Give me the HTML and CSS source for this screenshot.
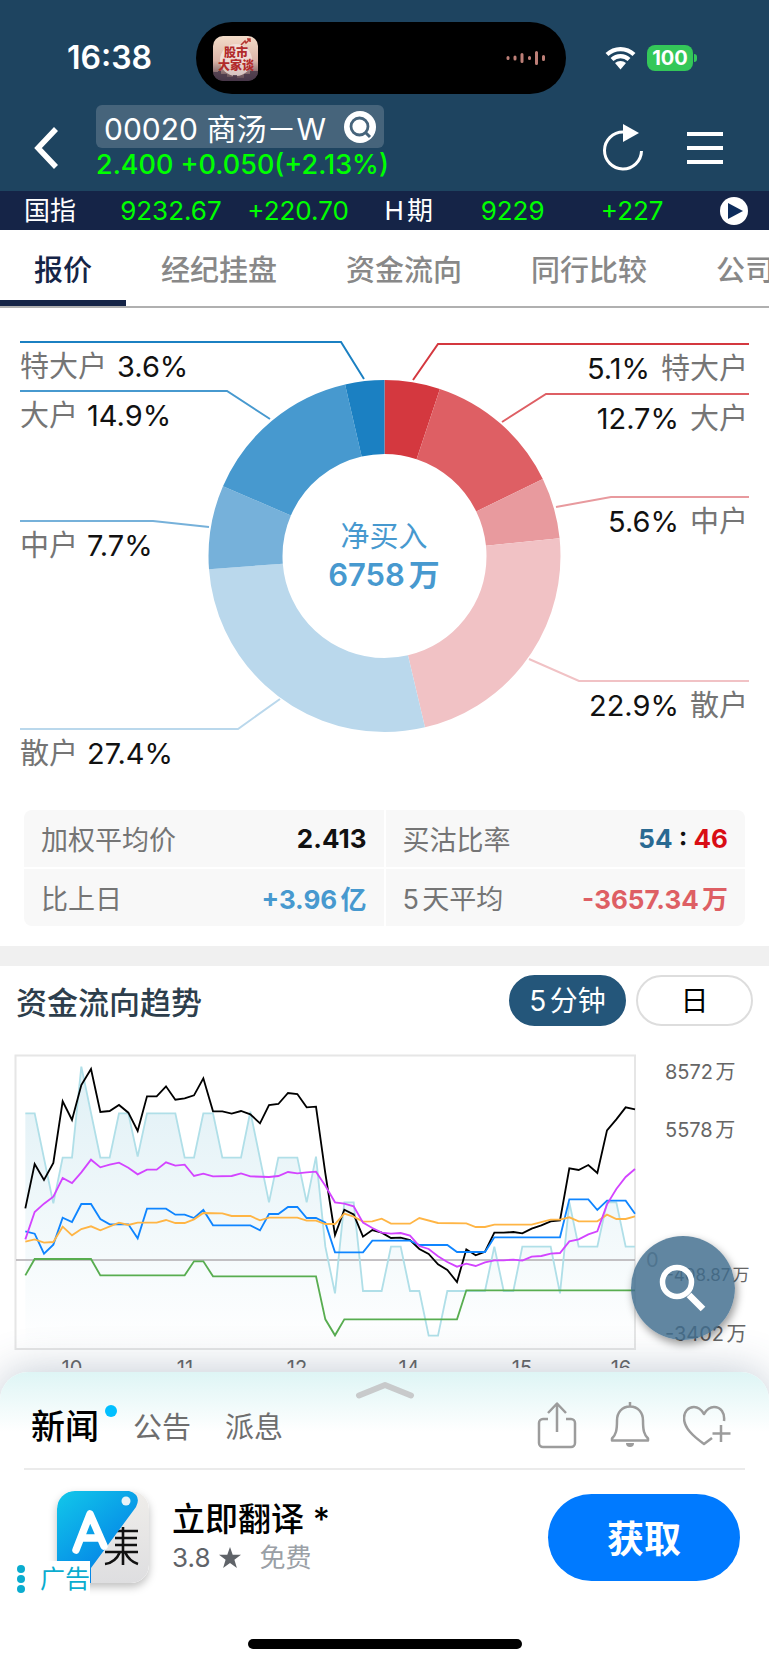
FILE: index.html
```html
<!DOCTYPE html>
<html lang="zh-CN">
<head>
<meta charset="utf-8">
<meta name="viewport" content="width=device-width, initial-scale=1">
<title>00020 商汤－W</title>
<link rel="stylesheet" href="styles.css">
</head>
<body>
<header class="header">
  <div class="status">
    <time class="clock">16:38</time>
    <div class="island">
      <svg class="app-icon" viewBox="0 0 45 45" aria-hidden="true">
        <defs>
          <linearGradient id="sky" x1="0" y1="0" x2="0" y2="1"><stop offset="0" stop-color="#f3dcc9"/><stop offset=".55" stop-color="#dcb5a8"/><stop offset="1" stop-color="#4e3b48"/></linearGradient>
          <clipPath id="tile"><rect width="45" height="45" rx="10"/></clipPath>
        </defs>
        <g clip-path="url(#tile)">
          <rect width="45" height="45" fill="url(#sky)"/>
          <circle cx="23" cy="24" r="16" fill="#f4e6e0" opacity=".75"/>
          <path d="M28 9l4-4 1 2 4-4m-3 0h3v3" stroke="#b5342f" stroke-width="1.500" fill="none"/>
          <path d="M0 36h5v-1h3v3h6v3h6v-2h4v3h7v-4h6v-3h8v13H0z" fill="#463648" opacity=".8"/>
        </g>
        <text x="23" y="21" class="tile-text">股市</text>
        <text x="23" y="34" class="tile-text">大家谈</text>
      </svg>
      <svg class="wave" viewBox="0 0 40 16" aria-hidden="true"><path d="M2 7.500v1M9 7v2M16 4.500v7M23.500 7.500v1M30.500 2.500v11M37.500 6.500v3"/></svg>
    </div>
    <div class="signals">
      <svg class="wifi" viewBox="0 0 31 24" aria-hidden="true"><path d="M2 8.500a19.500 19.500 0 0 1 27 0M7 13.500a12.500 12.500 0 0 1 17 0" fill="none" stroke="#fff" stroke-width="4.200"/><path d="M10 17a8.500 8.500 0 0 1 11 0l-5.500 6.500z" fill="#fff"/></svg>
      <span class="battery">100</span>
    </div>
  </div>
  <div class="nav">
    <button class="icon-btn back" aria-label="返回"><svg width="26" height="44" viewBox="0 0 26 44"><path d="M23 3L5 22l18 19" fill="none" stroke="#fff" stroke-width="5.500"/></svg></button>
    <div class="quote">
      <button class="stock"><span>00020 商汤－W</span>
        <svg width="32" height="32" viewBox="0 0 32 32" aria-hidden="true"><circle cx="16" cy="16" r="16" fill="#fff"/><circle cx="15.500" cy="15.500" r="8.500" fill="none" stroke="#46647b" stroke-width="2.800"/><path d="M21 21l5 5" stroke="#46647b" stroke-width="3"/></svg>
      </button>
      <p class="price">2.400 +0.050(+2.13%)</p>
    </div>
    <button class="icon-btn" aria-label="刷新"><svg width="42" height="48" viewBox="0 0 42 48"><path d="M20 8a18.500 18.500 0 1 0 18.500 19" fill="none" stroke="#fff" stroke-width="3"/><path d="M20 0l16 9-16 9z" fill="#fff"/></svg></button>
    <button class="icon-btn menu" aria-label="菜单"><svg width="36" height="32" viewBox="0 0 36 32"><path d="M0 2h36M0 16h36M0 30h36" stroke="#fff" stroke-width="4"/></svg></button>
  </div>
</header>
<section class="ticker">
  <span class="name">国指</span><span>9232.67</span><span>+220.70</span><span class="name">H期</span><span>9229</span><span>+227</span>
  <button class="icon-btn" aria-label="下一个"><svg width="28" height="28" viewBox="0 0 28 28"><circle cx="14" cy="14" r="14" fill="#fff"/><path d="M8 6l15 8-15 8z" fill="#0d2c5c"/></svg></button>
</section>
<nav class="tabs">
  <a href="#" class="active">报价</a><a href="#">经纪挂盘</a><a href="#">资金流向</a><a href="#">同行比较</a><a href="#">公司资料</a>
</nav>
<main>
  <svg class="donut" viewBox="0 0 769 502" role="img" aria-label="资金流向分布">
    <g class="ring" transform="rotate(-90 384.5 248)">
      <circle pathLength="100" cx="384.500" cy="248" r="139" stroke="#d4383f" stroke-dasharray="5.1 94.9"/>
      <circle pathLength="100" cx="384.500" cy="248" r="139" stroke="#de5f64" stroke-dasharray="12.7 87.3" stroke-dashoffset="-5.1"/>
      <circle pathLength="100" cx="384.500" cy="248" r="139" stroke="#e89a9e" stroke-dasharray="5.6 94.4" stroke-dashoffset="-17.8"/>
      <circle pathLength="100" cx="384.500" cy="248" r="139" stroke="#f1c2c5" stroke-dasharray="22.9 77.1" stroke-dashoffset="-23.4"/>
      <circle pathLength="100" cx="384.500" cy="248" r="139" stroke="#bad8ec" stroke-dasharray="27.5 72.5" stroke-dashoffset="-46.3"/>
      <circle pathLength="100" cx="384.500" cy="248" r="139" stroke="#76b1da" stroke-dasharray="7.7 92.3" stroke-dashoffset="-73.8"/>
      <circle pathLength="100" cx="384.500" cy="248" r="139" stroke="#4799cf" stroke-dasharray="14.9 85.1" stroke-dashoffset="-81.5"/>
      <circle pathLength="100" cx="384.500" cy="248" r="139" stroke="#1b80c2" stroke-dasharray="3.6 96.4" stroke-dashoffset="-96.4"/>
    </g>
    <g fill="none" stroke-width="2">
      <path stroke="#1b80c2" d="M20 34h321l23 37"/><path stroke="#4799cf" d="M20 83h207l43 28"/><path stroke="#76b1da" d="M20 213h133l56 6"/><path stroke="#bad8ec" d="M20 421h218l42-30"/>
      <path stroke="#d4383f" d="M749 36H438l-25 36"/><path stroke="#de5f64" d="M749 86H546l-44 28"/><path stroke="#e89a9e" d="M749 189H611l-55 10"/><path stroke="#f1c2c5" d="M749 373H579l-50-22"/>
    </g>
    <g class="slice">
      <text x="20" y="69">特大户 <tspan class="pct" x="117">3.6%</tspan></text>
      <text x="20" y="118">大户 <tspan class="pct" x="87">14.9%</tspan></text>
      <text x="20" y="248">中户 <tspan class="pct" x="87">7.7%</tspan></text>
      <text x="20" y="456">散户 <tspan class="pct" x="87">27.4%</tspan></text>
    </g>
    <g class="slice end">
      <text x="748" y="71">特大户</text><text class="pct" x="650" y="71">5.1%</text>
      <text x="748" y="121">大户</text><text class="pct" x="679" y="121">12.7%</text>
      <text x="748" y="224">中户</text><text class="pct" x="679" y="224">5.6%</text>
      <text x="748" y="408">散户</text><text class="pct" x="679" y="408">22.9%</text>
    </g>
    <text class="net" x="384" y="239">净买入</text>
    <text class="net net-value" x="384" y="278">6758万</text>
  </svg>
  <dl class="stats">
    <div><dt>加权平均价</dt><dd>2.413</dd></div>
    <div><dt>买沽比率</dt><dd><span class="buy">54</span> : <span class="sell">46</span></dd></div>
    <div><dt>比上日</dt><dd class="up">+3.96亿</dd></div>
    <div><dt>5天平均</dt><dd class="down">-3657.34万</dd></div>
  </dl>
  <section class="trend">
    <div class="trend-head">
      <h2>资金流向趋势</h2>
      <button class="pill on">5分钟</button>
      <button class="pill">日</button>
    </div>
    <div class="chart">
      <svg class="plot" viewBox="0 0 769 328" role="img" aria-label="资金流向趋势图">
        <defs><linearGradient id="fade" x1="0" y1="0" x2="0" y2="1"><stop offset="0" stop-color="#add8e6" stop-opacity=".38"/><stop offset="1" stop-color="#add8e6" stop-opacity="0"/></linearGradient></defs>
        <rect x="15.500" y="15.500" width="619.500" height="293.500" fill="none" stroke="#e6e6e6" stroke-width="2"/>
        <svg x="0" y="0" width="769" height="320" viewBox="0 0 2307 960">
          <path fill="url(#fade)" d="M76 927V220L104 220 160 490 188 353 216 353 244 80 301 353 329 353 357 220 385 220 413 350 441 220 526 220 554 353 582 353 610 220 639 220 667 353 723 353 751 215 807 487 835 353 892 353 920 487 948 350 976 620 1005 760 1033 487 1061 487 1089 753 1145 753 1173 620 1202 620 1230 753 1258 753 1286 887 1314 887 1342 753 1455 753 1483 620 1511 753 1540 753 1567 620 1652 620 1680 760 1708 487 1736 620 1792 620 1821 487 1849 487 1877 620 1905 620V927z"/>
          <path d="M48 660H1905" stroke="#b0adb0" stroke-width="5"/>
          <g fill="none" stroke-width="5.500">
            <polyline stroke="#b0dfe8" points="76,220 104,220 160,490 188,353 216,353 244,80 301,353 329,353 357,220 385,220 413,350 441,220 526,220 554,353 582,353 610,220 639,220 667,353 723,353 751,215 807,487 835,353 892,353 920,487 948,350 976,620 1005,760 1033,487 1061,487 1089,753 1145,753 1173,620 1202,620 1230,753 1258,753 1286,887 1314,887 1342,753 1455,753 1483,620 1511,753 1540,753 1567,620 1652,620 1680,760 1708,487 1736,620 1792,620 1821,487 1849,487 1877,620 1905,620"/>
            <polyline stroke="#58ad50" points="76,706 104,657 273,657 301,706 554,706 582,664 610,664 639,709 948,709 976,838 1005,886 1033,838 1371,838 1399,751 1905,751"/>
            <polyline stroke="#000" points="76,505 104,372 132,420 160,369 188,184 216,240 244,135 273,87 301,216 329,213 357,195 385,218 413,273 441,169 470,169 498,139 526,179 554,175 582,166 610,115 639,214 667,214 695,221 723,213 751,223 780,250 807,195 835,192 864,159 892,162 920,202 948,200 976,400 1005,585 1033,509 1061,523 1089,590 1117,570 1145,578 1173,594 1202,593 1230,600 1258,627 1286,642 1314,673 1342,690 1371,726 1399,628 1427,646 1455,635 1483,578 1511,578 1540,576 1567,580 1595,566 1624,556 1652,544 1680,541 1708,385 1736,390 1765,375 1792,399 1821,271 1849,238 1877,202 1905,208"/>
            <polyline stroke="#0f85ff" points="76,574 104,581 132,641 160,614 188,533 216,546 244,492 273,492 301,537 329,553 385,553 413,595 441,506 498,506 526,524 554,524 582,534 610,510 639,556 751,556 780,571 807,522 835,522 864,501 892,501 920,534 948,534 976,548 1005,637 1089,637 1117,602 1230,602 1258,615 1342,615 1371,636 1455,636 1483,592 1680,592 1708,478 1765,478 1792,510 1821,482 1877,482 1905,521"/>
            <polyline stroke="#ffb545" points="76,605 104,598 132,608 160,606 188,560 216,586 244,567 273,559 301,571 357,548 385,555 413,548 470,548 498,540 526,549 554,549 582,538 610,519 667,520 695,528 751,528 780,541 807,533 892,533 920,542 948,542 976,552 1005,552 1033,521 1061,530 1089,545 1117,544 1145,536 1173,551 1230,551 1258,534 1314,549 1399,550 1427,561 1455,561 1483,554 1595,554 1652,539 1680,539 1708,532 1736,544 1792,544 1821,524 1849,537 1877,537 1905,529"/>
            <polyline stroke="#d344ff" points="76,598 104,516 132,491 160,470 188,414 216,429 244,397 273,359 301,382 329,374 357,368 385,383 413,403 441,389 470,389 498,367 526,377 554,374 582,408 610,401 639,409 695,408 723,400 751,409 807,411 835,408 864,396 892,400 920,397 948,395 976,437 1005,487 1033,491 1061,499 1089,548 1117,564 1145,578 1173,581 1202,579 1230,587 1258,618 1286,627 1314,649 1342,666 1371,680 1399,671 1427,678 1455,667 1483,661 1511,661 1540,659 1567,662 1595,650 1624,648 1652,641 1680,639 1708,604 1736,598 1765,583 1792,574 1821,493 1849,447 1877,411 1905,387"/>
          </g>
        </svg>
        <g class="axis">
          <text x="665" y="39">8572万</text><text x="665" y="97">5578万</text>
          <text x="646" y="227" class="zero">0</text>
          <text x="666" y="241" class="small">-408.87万</text><text x="665" y="301">-3402万</text>
        </g>
        <g class="axis hours">
          <text x="72" y="335">10</text><text x="185" y="335">11</text><text x="297" y="335">12</text><text x="409" y="335">14</text><text x="522" y="335">15</text><text x="621" y="335">16</text>
        </g>
      </svg>
      <button class="fab" aria-label="搜索"><svg width="48" height="48" viewBox="0 0 48 48"><circle cx="18" cy="18" r="14.500" fill="none" stroke="#fff" stroke-width="5.500"/><path d="M30 31l14 14" stroke="#fff" stroke-width="6.500"/></svg></button>
    </div>
  </section>
</main>
<footer class="sheet">
  <button class="grip" aria-label="展开"><svg width="60" height="18" viewBox="0 0 60 18"><path d="M4 14.500L30 4l26 10.500" fill="none" stroke="#c8cacb" stroke-width="6" stroke-linecap="round" stroke-linejoin="round"/></svg></button>
  <div class="sheet-bar">
    <a href="#" class="current">新闻<i class="dot"></i></a>
    <a href="#">公告</a>
    <a href="#">派息</a>
    <div class="actions">
      <button class="icon-btn" aria-label="分享"><svg width="40" height="48" viewBox="0 0 40 48"><path d="M11 18H6a4 4 0 0 0-4 4v20a4 4 0 0 0 4 4h28a4 4 0 0 0 4-4V22a4 4 0 0 0-4-4h-5M20 31V3M11 12l9-9.500 9 9.500"/></svg></button>
      <button class="icon-btn" aria-label="提醒"><svg width="40" height="48" viewBox="0 0 40 48"><path d="M20 1v4M2 39.500h36v-2c-4-4-5-8-5-18 0-8-5-14-13-14S7 11.500 7 19.500c0 10-1 14-5 18z"/><path class="solid" d="M16 42h8a4 4 0 0 1-8 0z"/></svg></button>
      <button class="icon-btn" aria-label="加入自选"><svg width="48" height="48" viewBox="0 0 48 48"><path d="M41 20c1-8-3-14-10-14-4 0-7 2-10 7-3-5-6-7-10-7C5 6 1 11 1 17c0 10 9 18 20 26l8-6M38 24v17M29.500 32.500h18"/></svg></button>
    </div>
  </div>
  <div class="ad">
    <div class="ad-art">
      <svg class="ad-icon" viewBox="0 0 92 92" aria-hidden="true">
        <defs>
          <linearGradient id="blue" x1="0" y1="0" x2=".7" y2="1"><stop offset="0" stop-color="#12c8ea"/><stop offset="1" stop-color="#0279e6"/></linearGradient>
          <linearGradient id="paper" x1="0" y1="0" x2="0" y2="1"><stop offset="0" stop-color="#efedea"/><stop offset="1" stop-color="#dedee0"/></linearGradient>
        </defs>
        <rect width="92" height="92" rx="18" fill="url(#paper)"/>
        <path d="M60 36l-4 8M54 40h27M58 47h22M58 54h22M48 61h33M66 36v38M63 61c-3 7-7 11-15 12M68 61c3 7 7 10 13 12" stroke="#111" stroke-width="2.600" fill="none"/>
        <path d="M18 0h54q13 4 7 16L34 77V92H18Q0 92 0 74V18Q0 0 18 0z" fill="url(#blue)"/>
        <path d="M19 59l14-36 14 32M25 47h18" fill="none" stroke="#fff" stroke-width="7.500" stroke-linecap="round" stroke-linejoin="round"/>
        <circle cx="69" cy="10" r="4.500" fill="#e9f3f8"/>
      </svg>
      <span class="ad-tag"><svg width="8" height="28" viewBox="0 0 8 28" aria-hidden="true"><circle cx="4" cy="4" r="4"/><circle cx="4" cy="14" r="4"/><circle cx="4" cy="24" r="4"/></svg>广告</span>
    </div>
    <div class="ad-text">
      <h3>立即翻译 *</h3>
      <p>3.8 <svg width="22" height="22" viewBox="0 0 22 22" aria-hidden="true"><path d="M11 0l2.700 7.700H22l-6.600 5 2.500 8.300L11 16l-6.900 5 2.500-8.300L0 7.700h8.300z"/></svg> <span>免费</span></p>
    </div>
    <button class="get">获取</button>
  </div>
  <div class="home"></div>
</footer>
</body>
</html>
```
FILE: styles.css
```css
* { box-sizing: border-box; }
body { margin: 0; background: #fff; color: #111; font-family: Inter, "Noto Sans CJK SC", sans-serif; text-autospace: normal; overflow-x: hidden; }
button { font: inherit; border: 0; padding: 0; background: none; cursor: pointer; }
a { color: inherit; text-decoration: none; }
h2, h3, p, dl, dd { margin: 0; }
svg { display: block; }
.icon-btn { display: block; flex: none; }

.header { background: #1e4460; color: #fff; height: 191px; }
.status { display: grid; grid-template-columns: 196fr 370fr 203fr; padding-top: 22px; align-items: center; }
.clock { padding-left: 67px; font-size: 32px; font-weight: 600; line-height: 72px; }
.island { height: 72px; border-radius: 36px; background: #000; display: flex; align-items: center; justify-content: space-between; padding: 0 20px 0 17px; }
.app-icon { width: 45px; height: 45px; }
.tile-text { font-size: 12px; font-weight: 900; text-anchor: middle; fill: #b22a2a; }
.wave { width: 40px; height: 16px; stroke: #bd7f77; stroke-width: 3; stroke-linecap: round; }
.signals { display: flex; align-items: center; gap: 11px; padding-left: 39px; }
.wifi { width: 31px; height: 24px; }
.battery { position: relative; width: 46px; line-height: 26px; border-radius: 8px; background: #34c759; font-size: 20px; font-weight: 700; text-align: center; }
.battery::after { content: ""; position: absolute; right: -4px; top: 9px; width: 3px; height: 8px; border-radius: 0 3px 3px 0; background: #34c759; }

.nav { display: flex; align-items: center; padding: 11px 46px 0 33px; }
.back { margin-right: 37px; }
.quote { flex: 1; padding-bottom: 8px; }
.stock { display: flex; align-items: center; gap: 18px; height: 43px; padding: 0 8px; border-radius: 6px; background: #46647b; color: #fff; font-size: 30px; white-space: nowrap; }
.price { color: #0f0; font-size: 27px; font-weight: 500; line-height: 34px; white-space: nowrap; }
.menu { margin-left: 42px; }

.ticker { display: grid; grid-template-columns: 96fr 127fr 137fr 96fr 120fr 119fr 28px; align-items: center; height: 39px; padding: 0 21px 0 24px; background: #152447; color: #0f0; font-size: 26px; line-height: 38px; white-space: nowrap; }
.name { color: #fff; }

.tabs { display: flex; gap: 1px; height: 78px; border-bottom: 2px solid #b0b0b0; overflow: hidden; color: #888; font-size: 29px; font-weight: 500; line-height: 82px; }
.tabs a { flex: none; padding: 0 34px; }
.tabs .active { color: #152447; border-bottom: 6px solid #152447; }

.donut { width: 100%; height: auto; }
.ring circle { fill: none; stroke-width: 74; }
.slice text { font-size: 29px; fill: #757575; }
.slice .pct { fill: #111; }
.end text { text-anchor: end; }
.net { font-size: 29px; text-anchor: middle; fill: #4799cf; }
.net-value { font-size: 31px; font-weight: 600; }

.stats { display: grid; grid-template-columns: 1fr 1fr; gap: 2px; margin: 0 24px; border-radius: 8px; overflow: hidden; }
.stats div { display: flex; justify-content: space-between; align-items: center; height: 57px; padding: 0 17px; background: #f8f8f8; }
.stats dt { color: #757575; font-size: 27px; }
.stats dd { font-size: 26px; font-weight: 700; }
.buy { color: #2a6a92; }
.sell { color: #d90d14; }
.stats .up { color: #4799cf; }
.stats .down { color: #de5f64; }

.trend { margin-top: 20px; border-top: 20px solid #f0f0f0; }
.trend-head { display: flex; align-items: center; gap: 10px; height: 74px; padding: 0 16px 5px; }
.trend-head h2 { flex: 1; color: #2d3e4c; font-size: 31px; font-weight: 500; }
.pill { width: 117px; height: 51px; border: 2px solid #ddd; border-radius: 26px; background: #fff; color: #000; font-size: 28px; line-height: 46px; }
.on { border-color: #24567a; background: #24567a; color: #fff; }
.chart { position: relative; }
.plot { width: 100%; height: auto; }
.axis { font-size: 20px; fill: #666; }
.zero { fill: #999; }
.small { font-size: 17px; }
.hours { text-anchor: middle; }
.fab { position: absolute; right: 34px; bottom: 28px; z-index: 2; display: grid; place-items: center; width: 104px; height: 104px; border-radius: 50%; background: rgba(62, 107, 140, .82); box-shadow: 2px 4px 8px rgba(0, 0, 0, .4); }

.sheet { position: relative; margin-top: 4px; height: 293px; border-radius: 28px 28px 0 0; background: linear-gradient(#def5f5, #fff 60px); box-shadow: 0 0 44px rgba(60, 85, 115, .32); }
.grip { display: block; margin: 0 auto; padding-top: 9px; }
.sheet-bar { display: flex; align-items: center; height: 71px; margin: 0 24px; border-bottom: 2px solid #ebebeb; padding: 0 14px 18px 7px; color: #6e6e6e; font-size: 29px; gap: 34px; }
.sheet-bar .current { position: relative; color: #000; font-size: 34px; font-weight: 500; }
.dot { position: absolute; left: 74px; top: 5px; width: 12px; height: 12px; border-radius: 50%; background: #00bfff; }
.actions { display: flex; gap: 33px; margin-left: auto; }
.actions path { fill: none; stroke: #9c9c9c; stroke-width: 2.5; stroke-linejoin: round; }
.actions .solid { fill: #9c9c9c; stroke: none; }
.ad { display: flex; align-items: center; padding: 21px 29px 0 57px; }
.ad-art { position: relative; margin-right: 23px; }
.ad-icon { width: 92px; height: 92px; border-radius: 18px; box-shadow: 0 4px 8px rgba(0, 0, 0, .25); }
.ad-tag { position: absolute; left: -40px; top: 70px; display: flex; align-items: center; gap: 15px; background: #fff; color: #0aaccf; font-size: 25px; line-height: 36px; white-space: nowrap; }
.ad-tag svg { fill: #0aaccf; }
.ad-text { flex: 1; }
.ad-text h3 { color: #000; font-size: 33px; font-weight: 500; line-height: 42px; }
.ad-text p { display: flex; align-items: center; gap: 9px; color: #5f6368; font-size: 26px; line-height: 36px; }
.ad-text p svg { fill: #5f6368; }
.ad-text p span { margin-left: 9px; color: #9aa0a6; }
.get { width: 192px; height: 87px; border-radius: 44px; background: #007aff; color: #fff; font-size: 37px; font-weight: 700; }
.home { width: 274px; height: 10px; margin: 56px auto 0; border-radius: 5px; background: #000; }
```
